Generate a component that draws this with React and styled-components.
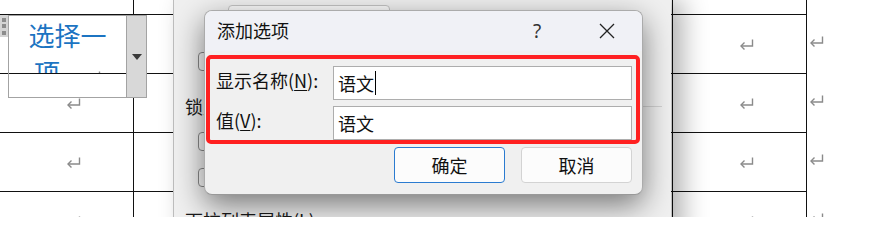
import styled, { createGlobalStyle } from "styled-components";

const GlobalStyle = createGlobalStyle`
  html, body {
    margin: 0;
    padding: 0;
    background: #ffffff;
    overflow: hidden;
  }
  body {
    font-family: "Noto Sans CJK SC", "Noto Sans", "Liberation Sans", sans-serif;
  }
`;

const CJK = `"Noto Sans CJK SC", "Noto Sans", "Liberation Sans", sans-serif`;

function ReturnMark() {
  return (
    <svg width="15" height="13" viewBox="0 0 15 13" fill="none">
      <path d="M13.5 1.5 V8 H2" stroke="#8a8a8a" strokeWidth="1.4" />
      <path d="M5.5 4.5 L2 8 L5.5 11.5" stroke="#8a8a8a" strokeWidth="1.4" />
    </svg>
  );
}

function CloseIcon() {
  return (
    <svg width="16" height="16" viewBox="0 0 16 16" fill="none">
      <path d="M1 1 L15 15 M15 1 L1 15" stroke="#222" strokeWidth="1.3" />
    </svg>
  );
}

const rows = [
  { height: 15, marks: false },
  { height: 59, marks: true },
  { height: 59, marks: true },
  { height: 59, marks: true },
  { height: 59, marks: true },
];

function App() {
  return (
    <>
      <GlobalStyle />
      <Page>
        <DocTable>
          {rows.map((row, i) => (
            <TableRow key={i} $height={row.height}>
              <Cell>{row.marks && <MarkSlot><ReturnMark /></MarkSlot>}</Cell>
              <Cell>{row.marks && <MarkSlot><ReturnMark /></MarkSlot>}</Cell>
              <Cell>{row.marks && <MarkSlot><ReturnMark /></MarkSlot>}</Cell>
              <RowEnd>{row.marks && <ReturnMark />}</RowEnd>
            </TableRow>
          ))}
        </DocTable>

        <ContentControl>
          <Grip>
            <GripDot />
            <GripDot />
            <GripDot />
          </Grip>
          <ControlBox>
            <ControlText>
              <TextClip>
                选择一项。<ReturnMark />
              </TextClip>
            </ControlText>
            <DropButton>
              <Triangle />
            </DropButton>
          </ControlBox>
        </ContentControl>

        <PropsDialog>
          <BackField />
          <CheckLine $top={17}>
            <CheckBox />
            <CheckLabel>内容被编辑后删除内容控件(R)</CheckLabel>
          </CheckLine>
          <SectionHead $top={26}>
            锁定:
            <SectionRule />
          </SectionHead>
          <CheckLine $top={17}>
            <CheckBox />
            <CheckLabel>无法删除内容控件(D)</CheckLabel>
          </CheckLine>
          <CheckLine $top={17}>
            <CheckBox />
            <CheckLabel>无法编辑内容(E)</CheckLabel>
          </CheckLine>
          <SectionHead $top={24}>
            下拉列表属性(L):
          </SectionHead>
        </PropsDialog>

        <AddDialog>
          <TitleBar>
            <Title>添加选项</Title>
            <TitleButton>?</TitleButton>
            <TitleButton>
              <CloseIcon />
            </TitleButton>
          </TitleBar>
          <Highlight>
            <FormRow>
              <FieldLabel>
                显示名称(<u>N</u>):
              </FieldLabel>
              <TextBox>
                语文
                <Caret />
              </TextBox>
            </FormRow>
            <FormRow>
              <FieldLabel>
                值(<u>V</u>):
              </FieldLabel>
              <TextBox>语文</TextBox>
            </FormRow>
          </Highlight>
          <ButtonRow>
            <DialogButton $primary>确定</DialogButton>
            <DialogButton>取消</DialogButton>
          </ButtonRow>
        </AddDialog>
      </Page>
    </>
  );
}

const Page = styled.div`
  position: relative;
  width: 871px;
  height: 217px;
  overflow: hidden;
  background: #ffffff;
`;

const DocTable = styled.div`
  display: flex;
  flex-direction: column;
`;

const TableRow = styled.div`
  display: grid;
  grid-template-columns: 134px 539px 134px 30px;
  height: ${(p) => p.$height}px;
`;

const Cell = styled.div`
  box-sizing: border-box;
  border-right: 1px solid #111;
  border-bottom: 1px solid #111;
  display: flex;
  align-items: center;
  justify-content: center;
`;

const MarkSlot = styled.span`
  display: flex;
  margin-left: 14px;
`;

const RowEnd = styled.div`
  padding: 14px 0 0 2px;
`;

const ContentControl = styled.div`
  position: absolute;
  left: 0;
  top: 15px;
  display: flex;
  align-items: flex-start;
`;

const Grip = styled.div`
  width: 8px;
  height: 22px;
  background: #d4d4d4;
  display: flex;
  flex-direction: column;
  align-items: center;
  justify-content: space-evenly;
`;

const GripDot = styled.span`
  width: 4px;
  height: 4px;
  background: #8c8c8c;
`;

const ControlBox = styled.div`
  display: flex;
  width: 139px;
  height: 83px;
  box-sizing: border-box;
  border: 1px solid #a3a3a3;
  background: #ffffff;
`;

const ControlText = styled.div`
  flex: 1;
`;

const TextClip = styled.div`
  height: 57px;
  overflow: hidden;
  border-bottom: 1px solid #111;
  font-family: ${CJK};
  font-size: 26px;
  line-height: 37px;
  color: #1c74c2;
  text-align: center;
  word-break: break-all;
`;

const DropButton = styled.div`
  width: 19px;
  border-left: 1px solid #a3a3a3;
  background: #d8d8d8;
  display: flex;
  align-items: center;
  justify-content: center;
`;

const Triangle = styled.span`
  width: 0;
  height: 0;
  border-left: 5px solid transparent;
  border-right: 5px solid transparent;
  border-top: 6px solid #3a3a3a;
`;

const PropsDialog = styled.div`
  position: absolute;
  left: 173px;
  top: 0;
  width: 498px;
  height: 240px;
  box-sizing: border-box;
  border-left: 1px solid #bdbdbd;
  background: #f0f0f0;
  box-shadow: 12px 0 24px rgba(0, 0, 0, 0.3);
  padding-left: 11px;
  display: flex;
  flex-direction: column;
  font-family: ${CJK};
  font-size: 18px;
  color: #1a1a1a;
`;

const BackField = styled.div`
  margin: 5px 0 0 43px;
  width: 162px;
  height: 30px;
  box-sizing: border-box;
  border: 1px solid #c4c4c4;
  border-radius: 4px;
  background: #fbfbfb;
`;

const CheckLine = styled.div`
  margin: ${(p) => p.$top}px 0 0 13px;
  display: flex;
  align-items: center;
  gap: 10px;
  height: 19px;
`;

const CheckBox = styled.span`
  width: 19px;
  height: 19px;
  box-sizing: border-box;
  border: 1px solid #8a8a8a;
  border-radius: 4px;
  background: #f8f8f8;
`;

const CheckLabel = styled.span`
  font-size: 16px;
  line-height: 19px;
`;

const SectionHead = styled.div`
  margin-top: ${(p) => p.$top}px;
  display: flex;
  align-items: center;
  gap: 8px;
  height: 18px;
  line-height: 18px;
  white-space: nowrap;
`;

const SectionRule = styled.span`
  flex: 1;
  height: 1px;
  margin-right: 9px;
  background: #d2d2d2;
`;

const AddDialog = styled.div`
  position: absolute;
  left: 204px;
  top: 10px;
  width: 439px;
  height: 185px;
  box-sizing: border-box;
  border: 1px solid #ababab;
  border-bottom-color: #999;
  border-radius: 8px;
  background: #f0f0f0;
  box-shadow: 0 10px 30px rgba(0, 0, 0, 0.5);
  overflow: hidden;
  display: flex;
  flex-direction: column;
  font-family: ${CJK};
  font-size: 18px;
  color: #111;
`;

const TitleBar = styled.div`
  height: 40px;
  flex-shrink: 0;
  display: flex;
  align-items: center;
  padding-left: 12px;
  background: #f0f1f6;
`;

const Title = styled.div`
  flex: 1;
  line-height: 24px;
  padding-bottom: 2px;
`;

const TitleButton = styled.div`
  width: 70px;
  height: 40px;
  display: flex;
  align-items: center;
  justify-content: center;
  font-family: "Noto Sans", "Liberation Sans", sans-serif;
  font-size: 19px;
  color: #333;
`;

const Highlight = styled.div`
  margin: 4px 2px 0 1px;
  height: 89px;
  flex-shrink: 0;
  box-sizing: border-box;
  border: 4px solid #ff2020;
  border-radius: 5px;
  padding: 7px 4px 0 6px;
  overflow: hidden;
  display: flex;
  flex-direction: column;
  gap: 6px;
`;

const FormRow = styled.div`
  display: grid;
  grid-template-columns: 117px 1fr;
  align-items: center;
  height: 34px;
  flex-shrink: 0;
`;

const FieldLabel = styled.div`
  line-height: 24px;
  padding-bottom: 7px;
  white-space: nowrap;

  u {
    text-underline-offset: 2px;
  }
`;

const TextBox = styled.div`
  height: 34px;
  box-sizing: border-box;
  border: 1px solid #adadad;
  background: #ffffff;
  padding-left: 4px;
  display: flex;
  align-items: center;
  line-height: 24px;
`;

const Caret = styled.span`
  width: 1px;
  height: 24px;
  margin-left: 1px;
  background: #000;
`;

const ButtonRow = styled.div`
  display: flex;
  justify-content: flex-end;
  gap: 16px;
  margin-top: 3px;
  padding-right: 10px;
`;

const DialogButton = styled.div`
  width: 111px;
  height: 36px;
  box-sizing: border-box;
  border: 1px solid ${(p) => (p.$primary ? "#2b7bd0" : "#d3d3d3")};
  border-radius: 4px;
  background: #fcfcfc;
  display: flex;
  align-items: center;
  justify-content: center;
  line-height: 24px;
`;

export default App;
